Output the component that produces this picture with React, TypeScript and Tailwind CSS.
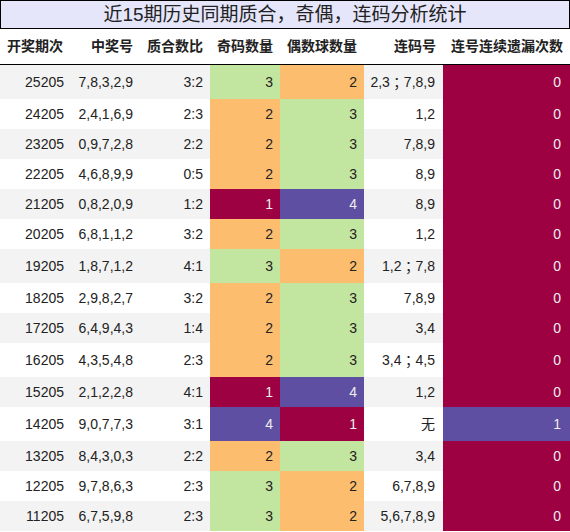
const GREEN = "bg-[#c2e5a0] text-[#222]";
const ORANGE = "bg-[#fdbd6f] text-[#222]";
const RED = "bg-[#9e0142] text-[#eee]";
const PURPLE = "bg-[#5e4fa2] text-[#eee]";

const countColor = (n: number) => {
  if (n === 3) return GREEN;
  if (n === 2) return ORANGE;
  if (n === 1) return RED;
  return PURPLE;
};

const missColor = (n: number) => (n === 0 ? RED : PURPLE);

type Row = {
  issue: string;
  nums: string;
  ratio: string;
  odd: number;
  even: number;
  lian: string;
  miss: number;
};

const rows: Row[] = [
  { issue: "25205", nums: "7,8,3,2,9", ratio: "3:2", odd: 3, even: 2, lian: "2,3；7,8,9", miss: 0 },
  { issue: "24205", nums: "2,4,1,6,9", ratio: "2:3", odd: 2, even: 3, lian: "1,2", miss: 0 },
  { issue: "23205", nums: "0,9,7,2,8", ratio: "2:2", odd: 2, even: 3, lian: "7,8,9", miss: 0 },
  { issue: "22205", nums: "4,6,8,9,9", ratio: "0:5", odd: 2, even: 3, lian: "8,9", miss: 0 },
  { issue: "21205", nums: "0,8,2,0,9", ratio: "1:2", odd: 1, even: 4, lian: "8,9", miss: 0 },
  { issue: "20205", nums: "6,8,1,1,2", ratio: "3:2", odd: 2, even: 3, lian: "1,2", miss: 0 },
  { issue: "19205", nums: "1,8,7,1,2", ratio: "4:1", odd: 3, even: 2, lian: "1,2；7,8", miss: 0 },
  { issue: "18205", nums: "2,9,8,2,7", ratio: "3:2", odd: 2, even: 3, lian: "7,8,9", miss: 0 },
  { issue: "17205", nums: "6,4,9,4,3", ratio: "1:4", odd: 2, even: 3, lian: "3,4", miss: 0 },
  { issue: "16205", nums: "4,3,5,4,8", ratio: "2:3", odd: 2, even: 3, lian: "3,4；4,5", miss: 0 },
  { issue: "15205", nums: "2,1,2,2,8", ratio: "4:1", odd: 1, even: 4, lian: "1,2", miss: 0 },
  { issue: "14205", nums: "9,0,7,7,3", ratio: "3:1", odd: 4, even: 1, lian: "无", miss: 1 },
  { issue: "13205", nums: "8,4,3,0,3", ratio: "2:2", odd: 2, even: 3, lian: "3,4", miss: 0 },
  { issue: "12205", nums: "9,7,8,6,3", ratio: "2:3", odd: 3, even: 2, lian: "6,7,8,9", miss: 0 },
  { issue: "11205", nums: "6,7,5,9,8", ratio: "2:3", odd: 3, even: 2, lian: "5,6,7,8,9", miss: 0 },
];

const headers = ["开奖期次", "中奖号", "质合数比", "奇码数量", "偶数球数量", "连码号", "连号连续遗漏次数"];

const cols = "grid grid-cols-[70px_70px_70px_70px_84px_79px_127px]";

// the semicolon in 连码号 is drawn centred, like the TC glyph
const Lian = ({ text }: { text: string }) => {
  const parts = text.split("；");
  if (parts.length === 1) return <>{text}</>;
  return (
    <>
      {parts[0]}
      <span className="font-['Noto_Sans_CJK_TC',sans-serif]">；</span>
      {parts[1]}
    </>
  );
};

export default function App() {
  return (
    <div className="w-[570px] h-[532px] bg-white text-[#222] font-['Liberation_Sans','Noto_Sans_CJK_SC',sans-serif] overflow-hidden">
      <div className="h-[29px] border border-black bg-[#e6e6fa] flex items-center justify-center text-[19px] leading-none">
        近15期历史同期质合，奇偶，连码分析统计
      </div>
      <div className={`${cols} h-[36px] border-b border-black font-bold text-[14px] items-center`}>
        {headers.map((h) => (
          <div key={h} className="text-right pr-[7px] whitespace-nowrap">
            {h}
          </div>
        ))}
      </div>
      {rows.map((r, i) => {
        const tall = r.lian.includes("；") || r.lian === "无";
        const stripe = i % 2 === 0 ? "bg-[#f3f3f3]" : "bg-white";
        return (
          <div
            key={r.issue}
            className={`${cols} ${tall ? "h-[34px]" : "h-[30px]"} ${stripe} text-[14px]`}
          >
            <div className="flex items-center justify-end pr-[6px]">{r.issue}</div>
            <div className="flex items-center justify-end pr-[7px]">{r.nums}</div>
            <div className="flex items-center justify-end pr-[7px]">{r.ratio}</div>
            <div className={`flex items-center justify-end pr-[7px] ${countColor(r.odd)}`}>{r.odd}</div>
            <div className={`flex items-center justify-end pr-[7px] ${countColor(r.even)}`}>{r.even}</div>
            <div className="flex items-center justify-end pr-[8px] whitespace-nowrap">
              <Lian text={r.lian} />
            </div>
            <div className={`flex items-center justify-end pr-[9px] ${missColor(r.miss)}`}>{r.miss}</div>
          </div>
        );
      })}
    </div>
  );
}
